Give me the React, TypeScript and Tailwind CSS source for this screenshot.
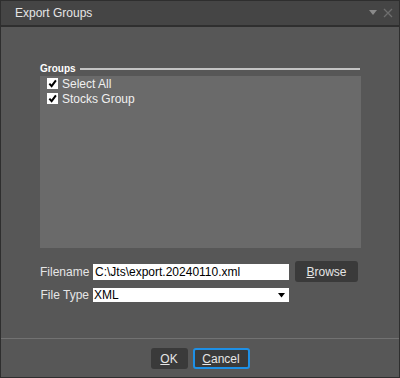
import { useState } from 'react';

const font = { fontFamily: '"Liberation Sans", Arial, sans-serif' };

function CheckRow({ label, checked, onToggle }: { label: string; checked: boolean; onToggle: () => void }) {
  return (
    <label className="flex h-[15px] cursor-pointer items-center gap-[4px]" onClick={onToggle}>
      <span className="flex h-[11px] w-[11px] items-center justify-center bg-white">
        {checked && (
          <svg width="9" height="9" viewBox="0 0 10 10">
            <path d="M1.5 5.2 L4 8 L8.8 1.5" fill="none" stroke="#000" strokeWidth="2.2" />
          </svg>
        )}
      </span>
      <span className="text-[12px] text-[#f0f0f0]">{label}</span>
    </label>
  );
}

export default function App() {
  const [selectAll, setSelectAll] = useState(true);
  const [stocks, setStocks] = useState(true);

  return (
    <div className="flex h-[378px] w-[400px] flex-col border border-[#2e2e2e] bg-[#575757]" style={font}>
      {/* title bar */}
      <div className="flex h-[26px] items-center justify-between border-b-2 border-[#2f2f2f] bg-[#454545] pl-[14px] pr-[6px]">
        <span className="text-[12px] text-[#e6e6e6]">Export Groups</span>
        <div className="flex items-center gap-[6px]">
          <svg width="8" height="6" viewBox="0 0 8 6">
            <path d="M0 0 H8 L4 5 Z" fill="#8a8a8a" />
          </svg>
          <svg width="10" height="10" viewBox="0 0 10 10">
            <path d="M1 1 L9 9 M9 1 L1 9" stroke="#6e6e6e" strokeWidth="1.3" />
          </svg>
        </div>
      </div>

      <div className="flex flex-1 flex-col px-[39px] pt-[36px]">
        {/* group header */}
        <div className="flex items-center gap-[4px]">
          <span className="text-[10px] font-bold leading-[12px] text-white">Groups</span>
          <div className="h-[2px] flex-1 bg-[#c4c4c4]" />
        </div>
        {/* list */}
        <div className="mt-[1px] flex h-[172px] w-[321px] flex-col bg-[#6a6a6a] pl-[7px]">
          <CheckRow label="Select All" checked={selectAll} onToggle={() => setSelectAll(!selectAll)} />
          <CheckRow label="Stocks Group" checked={stocks} onToggle={() => setStocks(!stocks)} />
        </div>

        {/* filename */}
        <div className="mt-[13px] flex items-center">
          <span className="w-[53px] pr-[4px] text-right text-[12px] text-[#e6e6e6]">Filename</span>
          <div className="flex h-[16px] w-[196px] items-center bg-white pl-[2px] text-[12px] text-black">
            C:\Jts\export.20240110.xml
          </div>
          <button className="ml-[6px] flex h-[21px] w-[63px] items-center justify-center rounded-[3px] bg-[#3a3a3a] text-[12px] text-[#e6e6e6]">
            <span className="underline underline-offset-1">B</span>rowse
          </button>
        </div>
        <div className="mt-[4px] flex items-center">
          <span className="w-[53px] pr-[4px] text-right text-[12px] text-[#e6e6e6]">File Type</span>
          <div className="flex h-[14px] w-[196px] items-center justify-between bg-white pl-[1px] pr-[4px] text-[12px] text-black">
            <span>XML</span>
            <svg width="7" height="5" viewBox="0 0 7 5">
              <path d="M0 0 H7 L3.5 4.5 Z" fill="#000" />
            </svg>
          </div>
        </div>
      </div>

      {/* footer */}
      <div className="h-[1px] bg-[#727272]" />
      <div className="flex h-[38px] items-start justify-center gap-[5px] pt-[9px]">
        <button className="flex h-[21px] w-[37px] items-center justify-center rounded-[3px] bg-[#3a3a3a] text-[12px] text-[#e6e6e6]">
          <span className="underline underline-offset-1">O</span>K
        </button>
        <button className="flex h-[21px] w-[57px] items-center justify-center rounded-[3px] border-2 border-[#1e90e6] bg-[#3a3a3a] text-[12px] text-[#e6e6e6]">
          <span className="underline underline-offset-1">C</span>ancel
        </button>
      </div>
    </div>
  );
}
